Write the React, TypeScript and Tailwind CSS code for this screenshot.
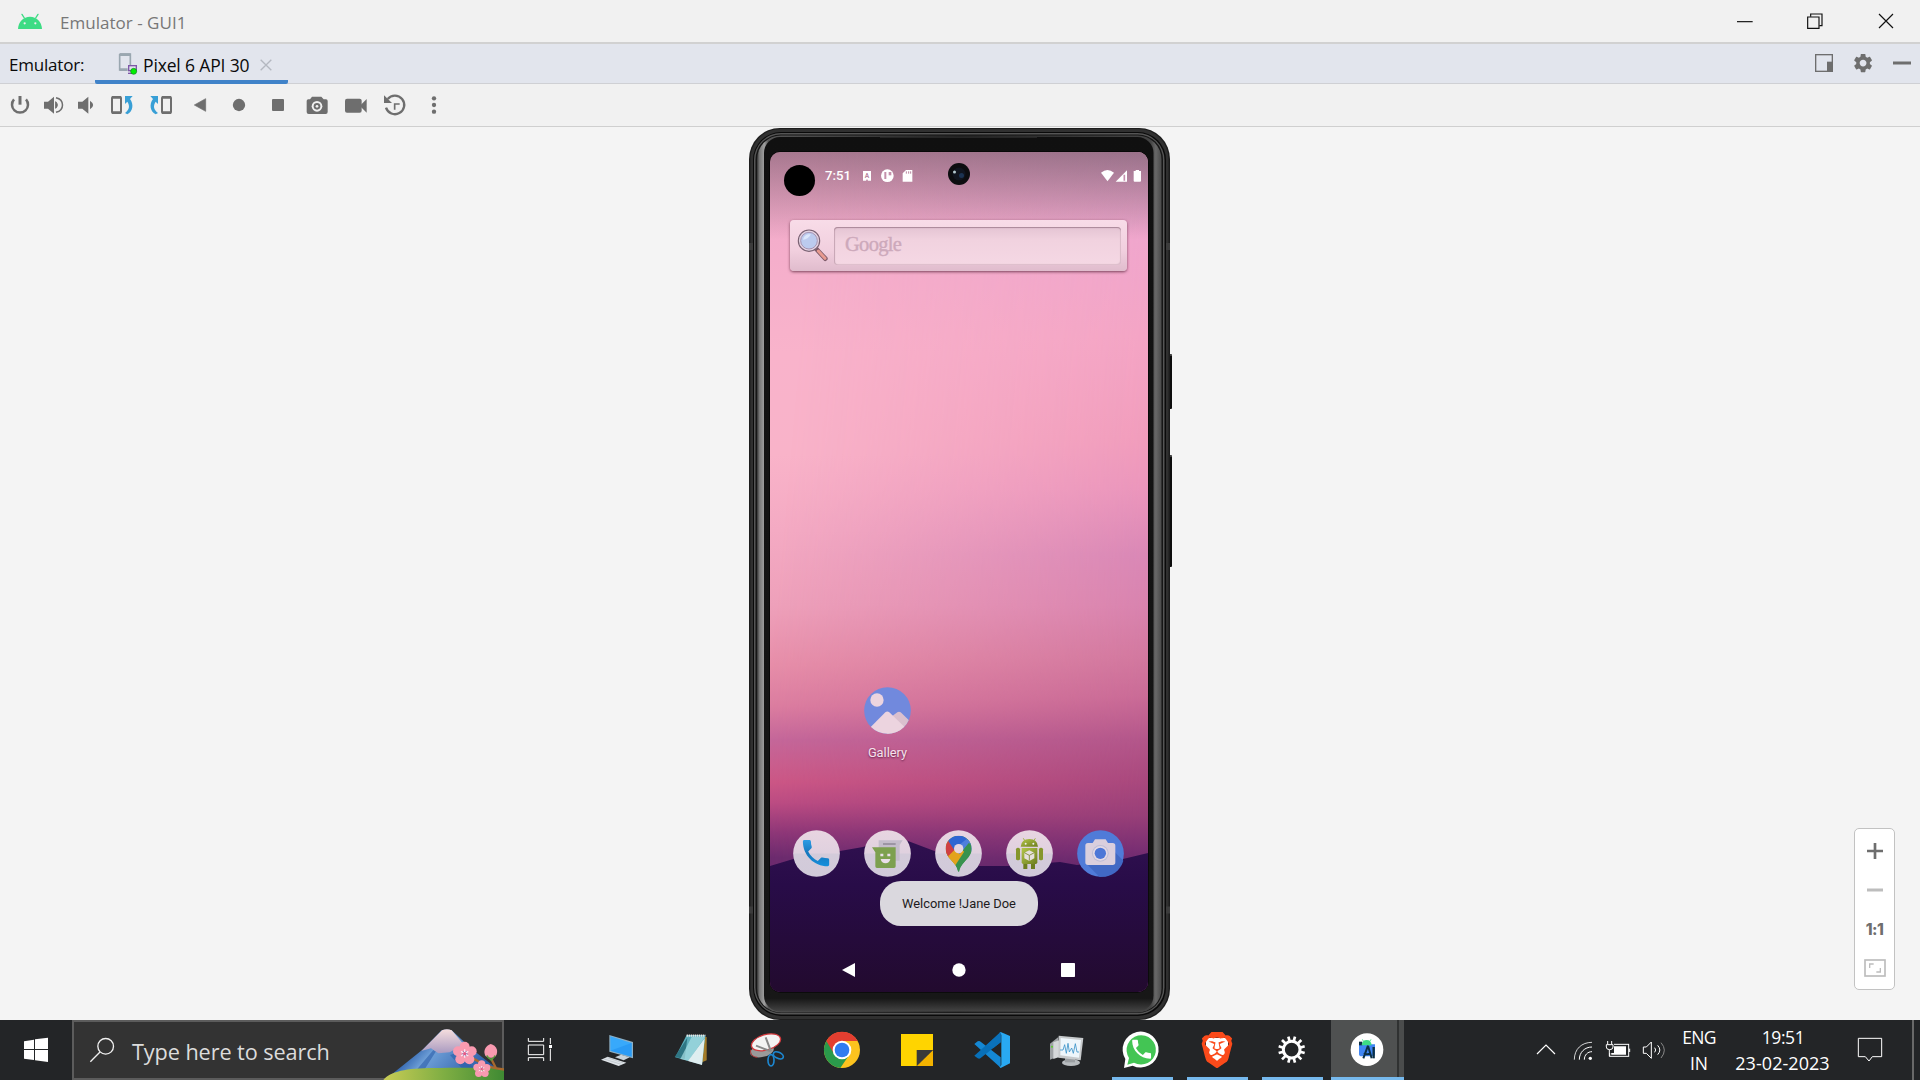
import type { ReactNode } from "react";
import { SiBrave } from "react-icons/si";

/* Artwork is drawn on a grid three times finer than the page. */
function Art({ x, y, w, h, children }: { x: number; y: number; w: number; h: number; children: ReactNode }) {
  return (
    <svg className="block shrink-0" width={w / 3} height={h / 3} viewBox={`${x} ${y} ${w} ${h}`} fill="none">
      {children}
    </svg>
  );
}

const G = "#6e6e6e";
const PHONE =
  "M6.62 10.79c1.44 2.83 3.76 5.14 6.59 6.59l2.2-2.2c.27-.27.67-.36 1.02-.24 1.12.37 2.33.57 3.57.57.55 0 1 .45 1 1V20c0 .55-.45 1-1 1-9.39 0-17-7.61-17-17 0-.55.45-1 1-1h3.5c.55 0 1 .45 1 1 0 1.25.2 2.45.57 3.57.11.35.03.74-.25 1.02l-2.2 2.2z";
const GEAR =
  "M19.14 12.94c.04-.3.06-.61.06-.94 0-.32-.02-.64-.07-.94l2.03-1.58c.18-.14.23-.41.12-.61l-1.92-3.32c-.12-.22-.37-.29-.59-.22l-2.39.96c-.5-.38-1.03-.7-1.62-.94l-.36-2.54c-.04-.24-.24-.41-.48-.41h-3.84c-.24 0-.43.17-.47.41l-.36 2.54c-.59.24-1.13.57-1.62.94l-2.39-.96c-.22-.08-.47 0-.59.22L2.74 8.87c-.12.21-.08.47.12.61l2.03 1.58c-.05.3-.09.63-.09.94s.02.64.07.94l-2.03 1.58c-.18.14-.23.41-.12.61l1.92 3.32c.12.22.37.29.59.22l2.39-.96c.5.38 1.03.7 1.62.94l.36 2.54c.05.24.24.41.48.41h3.84c.24 0 .44-.17.47-.41l.36-2.54c.59-.24 1.13-.56 1.62-.94l2.39.96c.22.08.47 0 .59-.22l1.92-3.32c.12-.22.07-.47-.12-.61l-2.01-1.58zM12 15.6c-1.98 0-3.6-1.62-3.6-3.6s1.62-3.6 3.6-3.6 3.6 1.62 3.6 3.6-1.62 3.6-3.6 3.6z";

function TitleBar() {
  return (
    <header className="flex h-11 items-center border-b-2 border-[#d1d1d1] bg-[#f1f1f1]">
      <Art x={0} y={0} w={180} h={126}>
        <path d="M54 87C55 65 70 50 90 50s35 15 36 37Z" fill="#3ddc84" />
        <path d="M73 54l-7-11M107 54l7-11" stroke="#3ddc84" strokeWidth="4" strokeLinecap="round" />
        <circle cx="74" cy="70" r="3.4" fill="#f1f1f1" />
        <circle cx="106" cy="70" r="3.4" fill="#f1f1f1" />
      </Art>
      <h1 className="grow pt-1 text-[17px] tracking-[0.02px] text-[#777]">Emulator - GUI1</h1>
      <Art x={90} y={0} w={570} h={126}>
        <path d="M111 65h47" stroke="#111" strokeWidth="3.5" />
        <path d="M332 50V42h34v35h-8" stroke="#111" strokeWidth="3.5" />
        <path d="M323 51h34v34h-34Z" stroke="#111" strokeWidth="3.5" />
        <path d="M537 42l42 42M579 42l-42 42" stroke="#111" strokeWidth="3.5" />
      </Art>
    </header>
  );
}

function TabRow() {
  return (
    <nav className="flex h-10 border-b border-[#cfd0d4] bg-[#e2e5ed] text-[17px] text-[#0a0a0a]">
      <div className="flex w-[95px] items-center pl-[9px] pt-0.5 tracking-[-0.2px]">Emulator:</div>
      <div className="flex h-10 w-[193px] items-center rounded-b-[2px] border-b-4 border-[#4083c9]">
        <div className="pt-1">
          <Art x={285} y={144} w={144} h={105}>
            <path d="M359 165h32v34M359 165v48h22" stroke="#9aa7b0" strokeWidth="5" />
            <path d="M359 167h32M359 212h24" stroke="#9aa7b0" strokeWidth="8" />
            <rect x="386" y="200" width="23" height="15" stroke="#7e57a8" strokeWidth="4" />
            <path d="M384 223h20" stroke="#7e57a8" strokeWidth="4" />
            <circle cx="401" cy="217" r="9" fill="#00f000" stroke="#187a28" strokeWidth="2" />
          </Art>
        </div>
        <span className="w-[116px] whitespace-nowrap pt-1.5 text-[17.500px] tracking-[-0.150px]">Pixel 6 API 30</span>
        <div className="pt-1.5">
          <Art x={778} y={144} w={66} h={105}>
            <path d="M783 179l32 32M815 179l-32 32" stroke="#b4b8c0" strokeWidth="4" />
          </Art>
        </div>
      </div>
      <div className="grow" />
      <Art x={330} y={132} w={330} h={117}>
        <rect x="347" y="164" width="50" height="50" stroke={G} strokeWidth="4" />
        <path d="M381 185h17v30h-17Z" fill={G} />
        <g transform="translate(455 155) scale(2.850)">
          <path d={GEAR} fill={G} />
        </g>
        <path d="M579 189h54" stroke={G} strokeWidth="9" />
      </Art>
    </nav>
  );
}

function Toolbar() {
  return (
    <div className="flex h-[43px] border-b border-[#cfcfcf] bg-[#f1f1f1]">
      <Art x={0} y={252} w={111} h={126}>
        <path d="M42 298a24 24 0 1 0 36 0" stroke={G} strokeWidth="7.500" />
        <path d="M60 288v26" stroke={G} strokeWidth="9" />
      </Art>
      <Art x={111} y={252} w={99} h={126}>
        <path d="M132 305h12l18-15v51l-18-15h-12Z" fill={G} />
        <path d="M167 305q10 10 0 20Z" fill={G} stroke={G} strokeWidth="3" />
        <path d="M168 293c26 6 26 38 0 44" stroke={G} strokeWidth="4.500" />
      </Art>
      <Art x={210} y={252} w={96} h={126}>
        <path d="M234 305h13l18-15v51l-18-15h-13Z" fill={G} />
        <path d="M270 302q19 13 0 26Z" fill={G} />
      </Art>
      <Art x={306} y={252} w={120} h={126}>
        <rect x="336" y="291" width="27" height="48" rx="3" stroke={G} strokeWidth="6" />
        <path d="M336 292h27M336 338h27" stroke={G} strokeWidth="8" />
        <path d="M375 288h23l-8 9c12 16 9 37-8 46l-7-4c14-11 15-22 7-34l-7 7Z" fill="#389fd6" />
      </Art>
      <Art x={426} y={252} w={117} h={126}>
        <rect x="486" y="291" width="27" height="48" rx="3" stroke={G} strokeWidth="6" />
        <path d="M486 292h27M486 338h27" stroke={G} strokeWidth="8" />
        <path d="M474 288h-23l8 9c-12 16-9 37 8 46l7-4c-14-11-15-22-7-34l7 7Z" fill="#389fd6" />
      </Art>
      <Art x={543} y={252} w={117} h={126}>
        <path d="M617 296v38l-34-19Z" fill={G} stroke={G} strokeWidth="2" />
      </Art>
      <Art x={660} y={252} w={117} h={126}>
        <circle cx="717" cy="315" r="18.500" fill={G} />
      </Art>
      <Art x={777} y={252} w={117} h={126}>
        <rect x="816" y="297" width="36" height="36" rx="3" fill={G} />
      </Art>
      <Art x={894} y={252} w={117} h={126}>
        <path d="M936 290h28l7 8h7q5 0 5 5v33q0 6-6 6h-51q-6 0-6-6v-33q0-5 5-5h5Z" fill={G} />
        <circle cx="951" cy="319" r="16" fill="#f1f1f1" />
        <circle cx="951" cy="319" r="10" fill={G} />
        <circle cx="951" cy="319" r="4" fill="#f1f1f1" />
      </Art>
      <Art x={1011} y={252} w={117} h={126}>
        <rect x="1035" y="296" width="50" height="42" rx="6" fill={G} />
        <path d="M1082 315l18-18v41l-18-18Z" fill={G} />
      </Art>
      <Art x={1128} y={252} w={117} h={126}>
        <path d="M1163 297a28 28 0 1 1-5 26" stroke={G} strokeWidth="7" />
        <path d="M1152 286v23h24Z" fill={G} />
        <path d="M1184 329v-17h15" stroke={G} strokeWidth="5" />
      </Art>
      <Art x={1245} y={252} w={117} h={126}>
        <circle cx="1302" cy="295" r="6.500" fill={G} />
        <circle cx="1302" cy="315" r="6.500" fill={G} />
        <circle cx="1302" cy="335" r="6.500" fill={G} />
      </Art>
    </div>
  );
}

function PhoneBody() {
  return (
    <svg className="absolute left-0 top-0" width="424" height="893" viewBox="749 127 424 893">
      <defs>
        <linearGradient id="rimL" x1="0" x2="1" y1="0" y2="0">
          <stop offset="0" stopColor="#333" />
          <stop offset="0.006" stopColor="#777" />
          <stop offset="0.018" stopColor="#a0a0a0" />
          <stop offset="0.028" stopColor="#555" />
          <stop offset="0.5" stopColor="#222" />
          <stop offset="0.974" stopColor="#444" />
          <stop offset="0.986" stopColor="#686868" />
          <stop offset="1" stopColor="#4a4a4a" />
        </linearGradient>
        <linearGradient id="glass" x1="0" x2="0" y1="0" y2="1">
          <stop offset="0" stopColor="#101010" />
          <stop offset="0.985" stopColor="#171717" />
          <stop offset="1" stopColor="#444" />
        </linearGradient>
      </defs>
      <rect x="1168" y="354" width="4" height="55" rx="1" fill="#0c0c0c" />
      <rect x="1168" y="455" width="4" height="112" rx="1" fill="#0c0c0c" />
      <path d="M1169 355h3M1169 456h3" stroke="#777" />
      <rect x="749" y="128" width="421" height="892" rx="31" fill="#1d1d1d" />
      <rect x="750.500" y="129" width="418" height="890" rx="30" fill="#303030" />
      <rect x="753" y="132" width="413" height="884" rx="28" fill="#0a0a0a" />
      <rect x="754" y="133" width="410.500" height="881.500" rx="27" fill="#555" />
      <rect x="755.500" y="134.500" width="407.500" height="878.500" rx="25" fill="#151515" />
      <rect x="757" y="135.500" width="404.500" height="877" rx="24" fill="url(#rimL)" />
      <rect x="764" y="137" width="389.500" height="874.500" rx="16" fill="url(#glass)" />
      <path d="M749 246.500h4M1166 246.500h4M749 910h4M1166 910h4" stroke="#3c3c3c" strokeWidth="7" />
      <path d="M880 137.500h157" stroke="#262626" />
      <rect x="769.500" y="151.500" width="379" height="841" rx="11" fill="#000" />
    </svg>
  );
}

function Wallpaper() {
  return (
    <div className="absolute inset-0 bg-[linear-gradient(#e9a3c5_0%,#f4adcb_10%,#f9b3cb_24%,#f9b3c9_36%,#f4aac3_45%,#eea0ba_54%,#e78ea9_61%,#dc7da0_66%,#c5679a_70%,#cb5e8d_73%,#cd5786_75%,#bd4c83_77.5%,#8f3778_81%,#6c2b6e_84%)]">
      <div className="absolute inset-0 bg-[linear-gradient(#cf97bb_0%,#efa5cd_10%,#f3a3c4_22%,#f09bbb_34%,#ea94bb_40%,#d886b5_48%,#d882ae_54%,#d2789f_60%,#c96a96_65%,#b3568a_70%,#a9487d_75%,#983f78_79%,#7a2f73_83%,#5e2669_86%)] [mask-image:linear-gradient(95deg,transparent_10%,black_95%)]" />
      <div className="absolute inset-x-0 top-0 h-[88px] bg-[linear-gradient(rgba(60,50,55,0.38),rgba(60,50,55,0))]" />
      <svg className="absolute inset-0" width="378" height="840" viewBox="770 152 378 840">
        <defs>
          <linearGradient id="hill" x1="0" x2="0" y1="0" y2="1">
            <stop offset="0" stopColor="#301050" />
            <stop offset="0.300" stopColor="#280c48" />
            <stop offset="1" stopColor="#220a2e" />
          </linearGradient>
        </defs>
        <path
          d="M770 866l20-6 20-6 30-3 23-4 20-7c8-3 18-2 25 1l29 11c12 6 28 12 43 14h27l53-4 17 3 46-6 25-6v140H770Z"
          fill="url(#hill)"
        />
      </svg>
    </div>
  );
}

function StatusBar() {
  return (
    <div className="relative flex h-12 items-center pl-[55px]">
      <div className="absolute left-[14px] top-[13px] size-[31px] rounded-full bg-black" />
      <span className="-mt-px w-[30px] font-[Roboto,sans-serif] text-[13.200px] font-medium text-white">7:51</span>
      <Art x={345} y={96} w={255} h={144}>
        <path d="M369 153h24v29h-9l-3-5-3 5h-9Z" fill="#fff" />
        <text x="381" y="173" fontSize="20" fontWeight="700" textAnchor="middle" fill="#b9879f" fontFamily="Roboto, sans-serif">
          A
        </text>
        <circle cx="442" cy="167" r="19" fill="#fff" />
        <path d="M436 156v21" stroke="#c490ab" strokeWidth="6" />
        <rect x="446" y="156" width="8" height="10" fill="#c490ab" />
        <path d="M498 150h19v35h-29v-25Z" fill="#fff" />
        <path d="M499 154v7M506 154v7M512 154v7" stroke="#b9879f" strokeWidth="3" />
      </Art>
      <svg className="absolute left-[178px] top-[11px]" width="22" height="22" viewBox="0 0 22 22">
        <circle cx="11" cy="11" r="11" fill="#0d0d10" />
        <circle cx="11" cy="11" r="6.500" fill="#11151f" />
        <circle cx="13.500" cy="12.500" r="2.500" fill="#1c3352" />
        <circle cx="6.500" cy="9" r="1.500" fill="#b6cbd0" />
      </svg>
      <div className="grow" />
      <Art x={1074} y={96} w={150} h={144}>
        <path d="M1083 158q19-16 39 0l-19.500 26Z" fill="#fff" />
        <path d="M1161 151v34h-34Z" fill="#fff" />
        <path d="M1153 164v18" stroke="#c58dad" strokeWidth="5" />
        <path d="M1187 150h10v3h6v29q0 3-3 3h-16q-3 0-3-3v-29h6Z" fill="#fff" />
      </Art>
    </div>
  );
}

function SearchWidget() {
  return (
    <div className="relative ml-5 mr-[21px] mt-5 flex h-[51px] items-center rounded-[4px] bg-[linear-gradient(#f8dce8,#f1cfde_60%,#e0bccd)] pr-[6.500px] shadow-[0_1px_3px_rgba(90,40,60,0.8)]">
      <Art x={151} y={303} w={132} h={147}>
        <path d="M230 387l27 29" stroke="#7d5a68" strokeWidth="14" strokeLinecap="round" />
        <path d="M236 393l20 22" stroke="#e89a90" strokeWidth="9" strokeLinecap="round" />
        <circle cx="208" cy="362" r="32" fill="#e3d3e2" stroke="#7a6273" strokeWidth="3.500" />
        <circle cx="208" cy="362" r="25" fill="#bccbee" stroke="#a695b3" strokeWidth="3" />
        <path d="M190 359c2-12 12-18 24-16-6 10-14 16-24 16Z" fill="#dbe7fb" />
      </Art>
      <div className="flex h-[38px] grow items-center rounded-[4px] bg-[linear-gradient(#e4c4d3,#f1d2df_35%,#f5d8e4)] pb-0.5 pl-[11px] font-['Liberation_Serif',serif] text-[20.500px] tracking-[-0.7px] text-[#cda9bb] shadow-[inset_0_1px_1px_#a98797,inset_1px_0_1px_#c9a8b7,inset_-1px_-1px_1px_#dfc0ce] [-webkit-text-stroke:0.4px_#cda9bb]">
        Google
      </div>
    </div>
  );
}

function Dock() {
  return (
    <div className="-ml-px grid grid-cols-5 justify-items-center px-3">
      <Art x={162} y={510} w={141} h={141}>
        <defs>
          <linearGradient id="disc" x1="0" x2="0" y1="0" y2="1">
            <stop offset="0" stopColor="#e8d5e1" />
            <stop offset="0.480" stopColor="#e0d1df" />
            <stop offset="0.520" stopColor="#d3cbda" />
            <stop offset="1" stopColor="#d1cad9" />
          </linearGradient>
          <linearGradient id="call" x1="0" x2="0" y1="0" y2="1">
            <stop offset="0" stopColor="#2d9ce4" />
            <stop offset="0.500" stopColor="#1677bd" />
            <stop offset="1" stopColor="#1590dd" />
          </linearGradient>
        </defs>
        <circle cx="232.500" cy="580.500" r="70" fill="url(#disc)" />
        <g transform="translate(178.500 527) scale(4.380)">
          <path d={PHONE} fill="url(#call)" />
        </g>
      </Art>
      <Art x={374} y={510} w={141} h={141}>
        <circle cx="444.500" cy="580.500" r="70" fill="url(#disc)" />
        <path d="M418 541h72l-9 14v47h-63Z" fill="#c4bccb" />
        <path d="M431 552h38" stroke="#8f8997" strokeWidth="5" />
        <path d="M398 562h71v57q0 5-5 5h-51q-5 0-5-5v-42Z" fill="#7da04f" />
        <path d="M423 585h9M444 585h9" stroke="#eadfea" strokeWidth="7" />
        <path d="M424 597h29q-3 13-14.500 13T424 597Z" fill="#eadfea" />
      </Art>
      <Art x={586} y={510} w={141} h={141}>
        <circle cx="656.500" cy="580.500" r="70" fill="url(#disc)" />
        <clipPath id="pin">
          <path d="M657 527c-22 0-39 17-39 39 0 30 32 38 37 67q2 6 4 0c5-29 37-37 37-67 0-22-17-39-39-39Z" />
        </clipPath>
        <g clipPath="url(#pin)">
          <path d="M610 520h90v120h-90Z" fill="#38924f" />
          <path d="M610 540h20l27 26 20 16-39 40-30-20Z" fill="#e3a31c" />
          <path d="M617 534l13 12 20 20-28 30-20-20Z" fill="#cf3f43" />
          <path d="M622 592l34-33 24 22-36 42Z" fill="#e3a31c" />
          <path d="M624 540l16-20h30l14 20-42 28Z" fill="#2f66d3" />
          <path d="M680 538l24 6v30l-8 5-8-31-28 34-18-14Z" fill="#4f7fdc" />
          <path d="M691 548q6 12 5 28l-48 66v-28Z" fill="#38924f" />
        </g>
        <circle cx="657" cy="566" r="14" fill="#e4d5e2" />
      </Art>
      <Art x={798} y={510} w={141} h={141}>
        <circle cx="868.500" cy="580.500" r="70" fill="url(#disc)" />
        <defs>
          <linearGradient id="droid" x1="0" x2="1" y1="0" y2="1">
            <stop offset="0" stopColor="#b3c648" />
            <stop offset="1" stopColor="#6d7d20" />
          </linearGradient>
        </defs>
        <path d="M850 535l5 8M886 535l-5 8" stroke="#9fb13c" strokeWidth="3" />
        <path d="M842 560q2-23 26-23t26 23Z" fill="url(#droid)" />
        <circle cx="857" cy="551" r="3" fill="#eee" />
        <circle cx="880" cy="551" r="3" fill="#eee" />
        <rect x="828" y="563" width="12" height="38" rx="5" fill="#85962c" />
        <rect x="897" y="563" width="12" height="38" rx="5" fill="#85962c" />
        <path d="M850 608h12v19h-12ZM873 608h12v19h-12Z" fill="#6d7d20" />
        <path d="M845 564h47v43q0 5-5 5h-37q-5 0-5-5Z" fill="url(#droid)" />
        <path d="M868 571l15 7v17l-15 8-15-8v-17Z" fill="#e6e0dc" />
        <path d="M853 578l15 8 15-8M868 586v16" stroke="#77862a" strokeWidth="2.500" />
      </Art>
      <Art x={1010} y={510} w={141} h={141}>
        <circle cx="1080.500" cy="580.500" r="70" fill="#507bd8" />
        <path d="M1040 613l37 37c30 4 62-14 72-48l-25-25Z" fill="#4169c4" />
        <path d="M1064 538h32l7 11h14q8 0 8 8v50q0 8-8 8h-74q-8 0-8-8v-50q0-8 8-8h14Z" fill="#dacfdd" />
        <circle cx="1080" cy="580" r="25" fill="#bdbdd6" />
        <circle cx="1080" cy="580" r="22" fill="#e4d9e5" />
        <circle cx="1080" cy="580" r="17" fill="#4d77d7" />
      </Art>
    </div>
  );
}

function Phone() {
  return (
    <div className="relative ml-[749px] h-full w-[424px]">
      <PhoneBody />
      <div className="relative ml-[21px] h-[840px] w-[378px] translate-y-[25px] overflow-hidden rounded-[10px]">
        <Wallpaper />
        <div className="relative flex h-full flex-col font-[Roboto,sans-serif]">
          <StatusBar />
          <SearchWidget />
          <div className="-ml-px mt-[416px] grid grid-cols-5 justify-items-center px-3">
            <div className="col-start-2 flex flex-col items-center">
              <Art x={374} y={79} w={141} h={141}>
                <clipPath id="gal">
                  <circle cx="444.500" cy="149.500" r="70" />
                </clipPath>
                <g clipPath="url(#gal)">
                  <path d="M374 79h141v141H374Z" fill="#7189dd" />
                  <path d="M444 177l30-22q5-4 10 0l34 33v40h-74Z" fill="#dac0ce" />
                  <path d="M380 213l58-58q6-5 12 0l66 64v10H380Z" fill="#ecd4df" />
                  <circle cx="413" cy="118" r="20" fill="#ecd4df" />
                </g>
              </Art>
              <span className="mt-[9px] h-[19px] text-[12.800px] leading-[19px] text-[#f6e2ec] [text-shadow:0_1px_2px_rgba(60,0,40,0.7)]">
                Gallery
              </span>
            </div>
          </div>
          <div className="mt-[68px]">
            <Dock />
          </div>
          <div className="mt-1 flex h-[45px] w-[158px] items-center justify-center self-center rounded-[21px] bg-[#dad8de] text-[12.900px] text-[#1d1b20]">
            <span className="whitespace-nowrap">Welcome !Jane Doe</span>
          </div>
          <div className="mt-[37px] flex">
            <Art x={90} y={909} w={1134} h={42}>
              <path d="M345 909v42l-39-21Z" fill="#fff" />
              <circle cx="657" cy="930" r="20" fill="#fff" />
              <rect x="963" y="909" width="42" height="42" rx="2" fill="#fff" />
            </Art>
          </div>
        </div>
      </div>
    </div>
  );
}

function ZoomControls() {
  return (
    <div className="absolute right-[25px] top-[701px] flex h-[162px] w-[41px] flex-col items-center rounded-[5px] border border-[#c2c2c2] bg-white pt-px">
      <Art x={66} y={60} w={78} h={126}>
        <path d="M81 123h48M105 99v48" stroke={G} strokeWidth="8" />
      </Art>
      <Art x={66} y={186} w={78} h={114}>
        <path d="M81 240h48" stroke="#bdbdbd" strokeWidth="9" />
      </Art>
      <span className="flex h-[38px] items-center pt-0.5 font-[Inter,sans-serif] text-[15.500px] font-extrabold tracking-[-0.5px] text-[#6e6e6e]">
        1:1
      </span>
      <Art x={66} y={414} w={78} h={120}>
        <rect x="75" y="450" width="60" height="48" stroke="#bdbdbd" strokeWidth="5" />
        <path d="M89 474v-12h12M109 486h12v-12" stroke="#bdbdbd" strokeWidth="4" />
      </Art>
    </div>
  );
}

function SearchBox() {
  return (
    <div className="flex h-[60px] w-[432px] border-2 border-[#5c5c5c] bg-[#333]">
      <Art x={222} y={21} w={171} h={168}>
        <circle cx="317" cy="94" r="23.500" stroke="#f0f0f0" strokeWidth="4" />
        <path d="M300 111l-29 29" stroke="#f0f0f0" strokeWidth="4" />
      </Art>
      <span className="w-[249px] self-center whitespace-nowrap pl-px pt-1 text-[21.700px] tracking-[-0.1px] text-[#dcdcdc]">
        Type here to search
      </span>
      <div className="-mr-[2px]">
        <Art x={1140} y={21} w={372} h={174}>
          <defs>
            <linearGradient id="fuji" x1="0" x2="1" y1="0" y2="0.400">
              <stop offset="0" stopColor="#8fc4ec" />
              <stop offset="0.350" stopColor="#3a6db4" />
              <stop offset="0.500" stopColor="#6fa0d8" />
              <stop offset="1" stopColor="#2b5ca6" />
            </linearGradient>
            <linearGradient id="snow" x1="0" x2="0" y1="0" y2="1">
              <stop offset="0" stopColor="#f6dede" />
              <stop offset="1" stopColor="#a99ac0" />
            </linearGradient>
            <linearGradient id="grass" x1="0" x2="1" y1="0" y2="0">
              <stop offset="0" stopColor="#c9cc55" />
              <stop offset="0.500" stopColor="#7fae43" />
              <stop offset="1" stopColor="#3f8a33" />
            </linearGradient>
          </defs>
          <path d="M1170 182l100-80 55-56q15-5 30 0l60 56 80 62v31h-330Z" fill="url(#fuji)" />
          <path d="M1300 105l-55 65 28-6 35-55ZM1350 120l45 50 30-8-50-50Z" fill="#2c5da8" opacity="0.600" />
          <path d="M1264 108l62-62q15-7 29 0l50 58-22 2-12-6-22 12-34 3-22-15Z" fill="url(#snow)" />
          <path d="M1150 195c20-25 70-36 150-36 100-2 160 0 212 0v36Z" fill="url(#grass)" />
          <path d="M1418 130c30 14 40 26 72 30l24 4M1488 160l-14-28M1450 165l20-10" stroke="#a8692f" strokeWidth="7" />
          <g fill="#f99ab0">
            <circle cx="1394" cy="95" r="15" />
            <circle cx="1415" cy="109" r="15" />
            <circle cx="1408" cy="133" r="15" />
            <circle cx="1381" cy="133" r="15" />
            <circle cx="1374" cy="109" r="15" />
            <circle cx="1445" cy="147" r="11" />
            <circle cx="1460" cy="158" r="11" />
            <circle cx="1455" cy="175" r="11" />
            <circle cx="1436" cy="175" r="11" />
            <circle cx="1431" cy="157" r="11" />
            <path d="M1472 87c-14 4-24 20-16 35 8 8 24 8 32 0 8-14 2-30-16-35Z" />
          </g>
          <path d="M1460 122q12 20 26 0l-12 14Z" stroke="#5a9a3c" strokeWidth="4" fill="#5a9a3c" />
          <path d="M1394 103v25M1383 109l22 14M1405 109l-22 14" stroke="#ffe6f0" strokeWidth="4" />
          <path d="M1445 153v18M1437 157l17 11M1453 157l-17 11" stroke="#ffe6f0" strokeWidth="3" />
          <circle cx="1394" cy="116" r="5" fill="#e55a86" />
          <circle cx="1445" cy="162" r="4" fill="#e55a86" />
        </Art>
      </div>
    </div>
  );
}

function Running({ children }: { children: ReactNode }) {
  return (
    <div className="relative h-[60px] w-[75px]">
      {children}
      <div className="absolute bottom-0 left-2 h-[3px] w-[61px] bg-[#76b9ed]" />
    </div>
  );
}

function Apps() {
  return (
    <div className="flex">
      <Art x={12} y={15} w={225} h={180}>
        <path d="M85 69v10h46V69M85 90h46v29H85ZM85 138v-10h46v10M151 69v18M151 101v37" stroke="#fff" strokeWidth="3" />
        <rect x="147" y="90" width="9" height="9" fill="#fff" />
      </Art>
      <Art x={237} y={15} w={225} h={180}>
        <path d="M328 60l71 21v49l-71-20Z" fill="#8fb0c4" />
        <path d="M331 64l64 20v41l-64-18Z" fill="#38a9fb" />
        <path d="M331 107l64-23v41Z" fill="#1c8df0" opacity="0.500" />
        <path d="M345 127l18-8 26 8-18 9Z" fill="#c9d3d9" />
        <path d="M303 134l20-9 56 18-23 10Z" fill="#dfe4e8" />
        <path d="M312 132l52 16M322 128l48 16" stroke="#a9b2b8" strokeWidth="1.500" />
      </Art>
      <Art x={462} y={15} w={225} h={180}>
        <path d="M600 66h20v70l-14 6Z" fill="#a37c2a" />
        <path d="M560 60h56l-10 89-80-22Z" fill="#5fb0bd" />
        <path d="M562 68l-38 58 30 6Z" fill="#2f7684" />
        <path d="M575 66h40l-50 72-24-6Z" fill="#a9e0e6" opacity="0.700" />
        <path d="M614 70l-8 80-42-12Z" fill="#dfeef0" />
        <path d="M560 62h56" stroke="#e6e6e6" strokeWidth="7" strokeDasharray="4 2" />
      </Art>
      <Art x={687} y={15} w={225} h={180}>
        <ellipse cx="786" cy="108" rx="36" ry="18" transform="rotate(-12 786 108)" fill="#9a9a9a" />
        <path d="M752 104c-2 14 6 22 20 23" stroke="#b03030" strokeWidth="3" />
        <ellipse cx="798" cy="82" rx="45" ry="23" transform="rotate(-16 798 82)" fill="#f3f3f3" stroke="#d2383c" strokeWidth="4" />
        <path d="M768 92l42 16M797 67l16 42" stroke="#888" strokeWidth="6" />
        <ellipse cx="813" cy="136" rx="9" ry="17" stroke="#1d87d0" strokeWidth="5" />
        <ellipse cx="835" cy="121" rx="16" ry="9" transform="rotate(25 835 121)" stroke="#1d87d0" strokeWidth="5" />
      </Art>
      <Art x={912} y={15} w={225} h={180}>
        <circle cx="1026" cy="105" r="54" fill="#fcc31e" />
        <path d="M1026 105L979 78a54 54 0 0 0 42 81l28-41Z" fill="#2a9a4b" />
        <path d="M979 78a54 54 0 0 1 94 0h-47l-23 40Z" fill="#e33e30" />
        <circle cx="1026" cy="105" r="28" fill="#fff" />
        <circle cx="1026" cy="105" r="22" fill="#2f7cf0" />
      </Art>
      <Art x={1137} y={15} w={225} h={180}>
        <path d="M1203 57h96v47l-49 49h-47Z" fill="#ffd400" />
        <path d="M1250 153l49-48v48Z" fill="#f3b300" />
        <path d="M1250 153v-48h49Z" fill="#3a3a3a" />
      </Art>
      <Art x={-18} y={15} w={225} h={180}>
        <path d="M43 87l10-8q5-3 9 1l60 47v31Z" fill="#1488d4" />
        <path d="M43 122l10 8q5 3 9-1l60-47V51Z" fill="#0870b8" />
        <path d="M122 51l28 12v82l-28 14-4-4q6 0 6-6V60q0-6-6-6Z" fill="#29a9f2" />
        <path d="M122 51v31l-22 17-20-8Z" fill="#0a72bb" />
      </Art>
      <Art x={207} y={15} w={225} h={180}>
        <path d="M270 86l25-20v58l-25 10Z" fill="#9fa3a6" />
        <path d="M280 82l18-6v50l-18 6Z" fill="#d5d8da" />
        <ellipse cx="333" cy="143" rx="27" ry="10" fill="#b8bcbf" />
        <path d="M315 128h30v14h-30Z" fill="#9a9ea1" />
        <path d="M296 62l74 7-8 67-67-8Z" fill="#c7cacc" />
        <path d="M302 69l61 6-6 53-56-7Z" fill="#eef6fb" />
        <path d="M300 105h9l5-16 5 26 5-30 4 26 7-12 5 16 6-29 5 25h6" stroke="#3b93c9" strokeWidth="2.500" />
        <circle cx="276" cy="95" r="3" fill="#58d02c" />
      </Art>
      <Running>
        <Art x={432} y={15} w={225} h={180}>
          <path d="M492 159l4-27a54 54 0 1 1 22 20Z" fill="#fff" />
          <path d="M502 149l5-20a44 44 0 1 1 15 14Z" fill="#43c554" />
          <g transform="translate(507 65) scale(3.150)">
            <path d={PHONE} fill="#fff" />
          </g>
        </Art>
      </Running>
      <Running>
        <div className="flex h-full items-center justify-center">
          <div className="relative flex">
            <div className="absolute inset-x-[7px] inset-y-[6px] rounded-b-xl bg-white" />
            <SiBrave className="relative h-9 w-9 text-[#fb4a1a]" />
          </div>
        </div>
      </Running>
      <Running>
        <Art x={882} y={15} w={225} h={180}>
          <circle cx="995" cy="104" r="25" stroke="#fff" strokeWidth="9" />
          <path
            d="M985 65l4 14M1005 65l-4 14M985 143l4-14M1005 143l-4-14M956 94l14 4M1034 94l-14 4M956 114l14-4M1034 114l-14-4M966 75l12 12M1024 75l-12 12M966 133l12-12M1024 133l-12-12"
            stroke="#fff"
            strokeWidth="8"
          />
        </Art>
      </Running>
      <div className="relative h-[60px] w-[75px]">
        <div className="absolute left-0.5 top-0 flex h-[60px] w-[73px] border-b-[3px] border-[#76b9ed]">
          <div className="w-[66px] bg-[#4f5151]" />
          <div className="w-0.5 bg-[#303232]" />
          <div className="w-[5px] bg-[#4a4c4c]" />
        </div>
        <div className="relative">
          <Art x={1107} y={15} w={225} h={180}>
            <circle cx="1221" cy="104" r="49" fill="#fff" />
            <path d="M1197 88h48v28q0 8-8 8h-32q-8 0-8-8Z" fill="#3f86f4" />
            <path d="M1197 80h10v11h-10Z" fill="#0b3045" />
            <path d="M1205 91c1-11 6-16 15-16s14 5 15 16Z" fill="#3ddc84" />
            <path d="M1210 78l-3-5M1230 78l3-5" stroke="#3ddc84" strokeWidth="2.500" />
            <path d="M1224 92l-14 38M1224 92l11 38M1212 114q10 8 20 0" stroke="#0b3045" strokeWidth="6" />
            <path d="M1241 96v34" stroke="#0b3045" strokeWidth="7" />
          </Art>
        </div>
      </div>
    </div>
  );
}

function Tray() {
  return (
    <div className="flex text-[17.500px] leading-[26px] text-white">
      <Art x={90} y={15} w={420} h={180}>
        <path d="M111 117l27-27 27 27" stroke="#fff" strokeWidth="3.500" />
        <g stroke="#fff" strokeWidth="3">
          <path d="M223 134c0-32 22-52 53-52" opacity="0.800" />
          <path d="M238 134c0-22 16-38 38-38" />
          <path d="M253 134c0-14 10-24 23-24" />
        </g>
        <circle cx="271" cy="130" r="5" fill="#fff" />
        <rect x="329" y="88" width="57" height="36" stroke="#fff" strokeWidth="3" />
        <path d="M332 94h46v25h-44Z" fill="#fff" />
        <path d="M318 76h24v38h-24Z" fill="#232526" />
        <path d="M323 78v10M335 78v10M319 89h20v7q0 8-10 8t-10-8ZM328 104v20M389 101v10" stroke="#fff" strokeWidth="3" />
        <path d="M430 96h9l15-15v49l-15-15h-9Z" stroke="#fff" strokeWidth="3" />
        <path d="M464 98q6 7 0 14M473 91q13 14 0 28" stroke="#fff" strokeWidth="3" />
        <path d="M483 83q20 22 0 46" stroke="#888" strokeWidth="3" />
      </Art>
      <div className="flex w-[58px] flex-col items-center pt-1">
        <span className="tracking-[-0.7px]">ENG</span>
        <span>IN</span>
      </div>
      <div className="flex w-[110px] flex-col items-center pt-1">
        <span className="tracking-[-0.4px]">19:51</span>
        <span className="pr-px text-[18px] tracking-[0.050px]">23-02-2023</span>
      </div>
      <Art x={1014} y={15} w={246} h={180}>
        <path d="M1075 70h70v55h-28l-10 13-11-13h-21Z" stroke="#fff" strokeWidth="3" />
        <path d="M1239 15v180" stroke="#777" strokeWidth="5" />
      </Art>
    </div>
  );
}

export default function App() {
  return (
    <div className="flex h-[1080px] w-[1920px] flex-col overflow-hidden bg-[#f4f4f4] font-['Open_Sans','Noto_Sans',sans-serif]">
      <TitleBar />
      <TabRow />
      <Toolbar />
      <main className="relative h-[893px]">
        <Phone />
        <ZoomControls />
      </main>
      <footer className="flex h-[60px] bg-[#232527]">
        <Art x={0} y={15} w={216} h={180}>
          <path d="M72 79l30-5v28H72ZM105 73l39-5v34h-39ZM72 105h30v30l-30-4ZM105 105h39v36l-39-5Z" fill="#fff" />
        </Art>
        <SearchBox />
        <Apps />
        <div className="grow" />
        <Tray />
      </footer>
    </div>
  );
}
